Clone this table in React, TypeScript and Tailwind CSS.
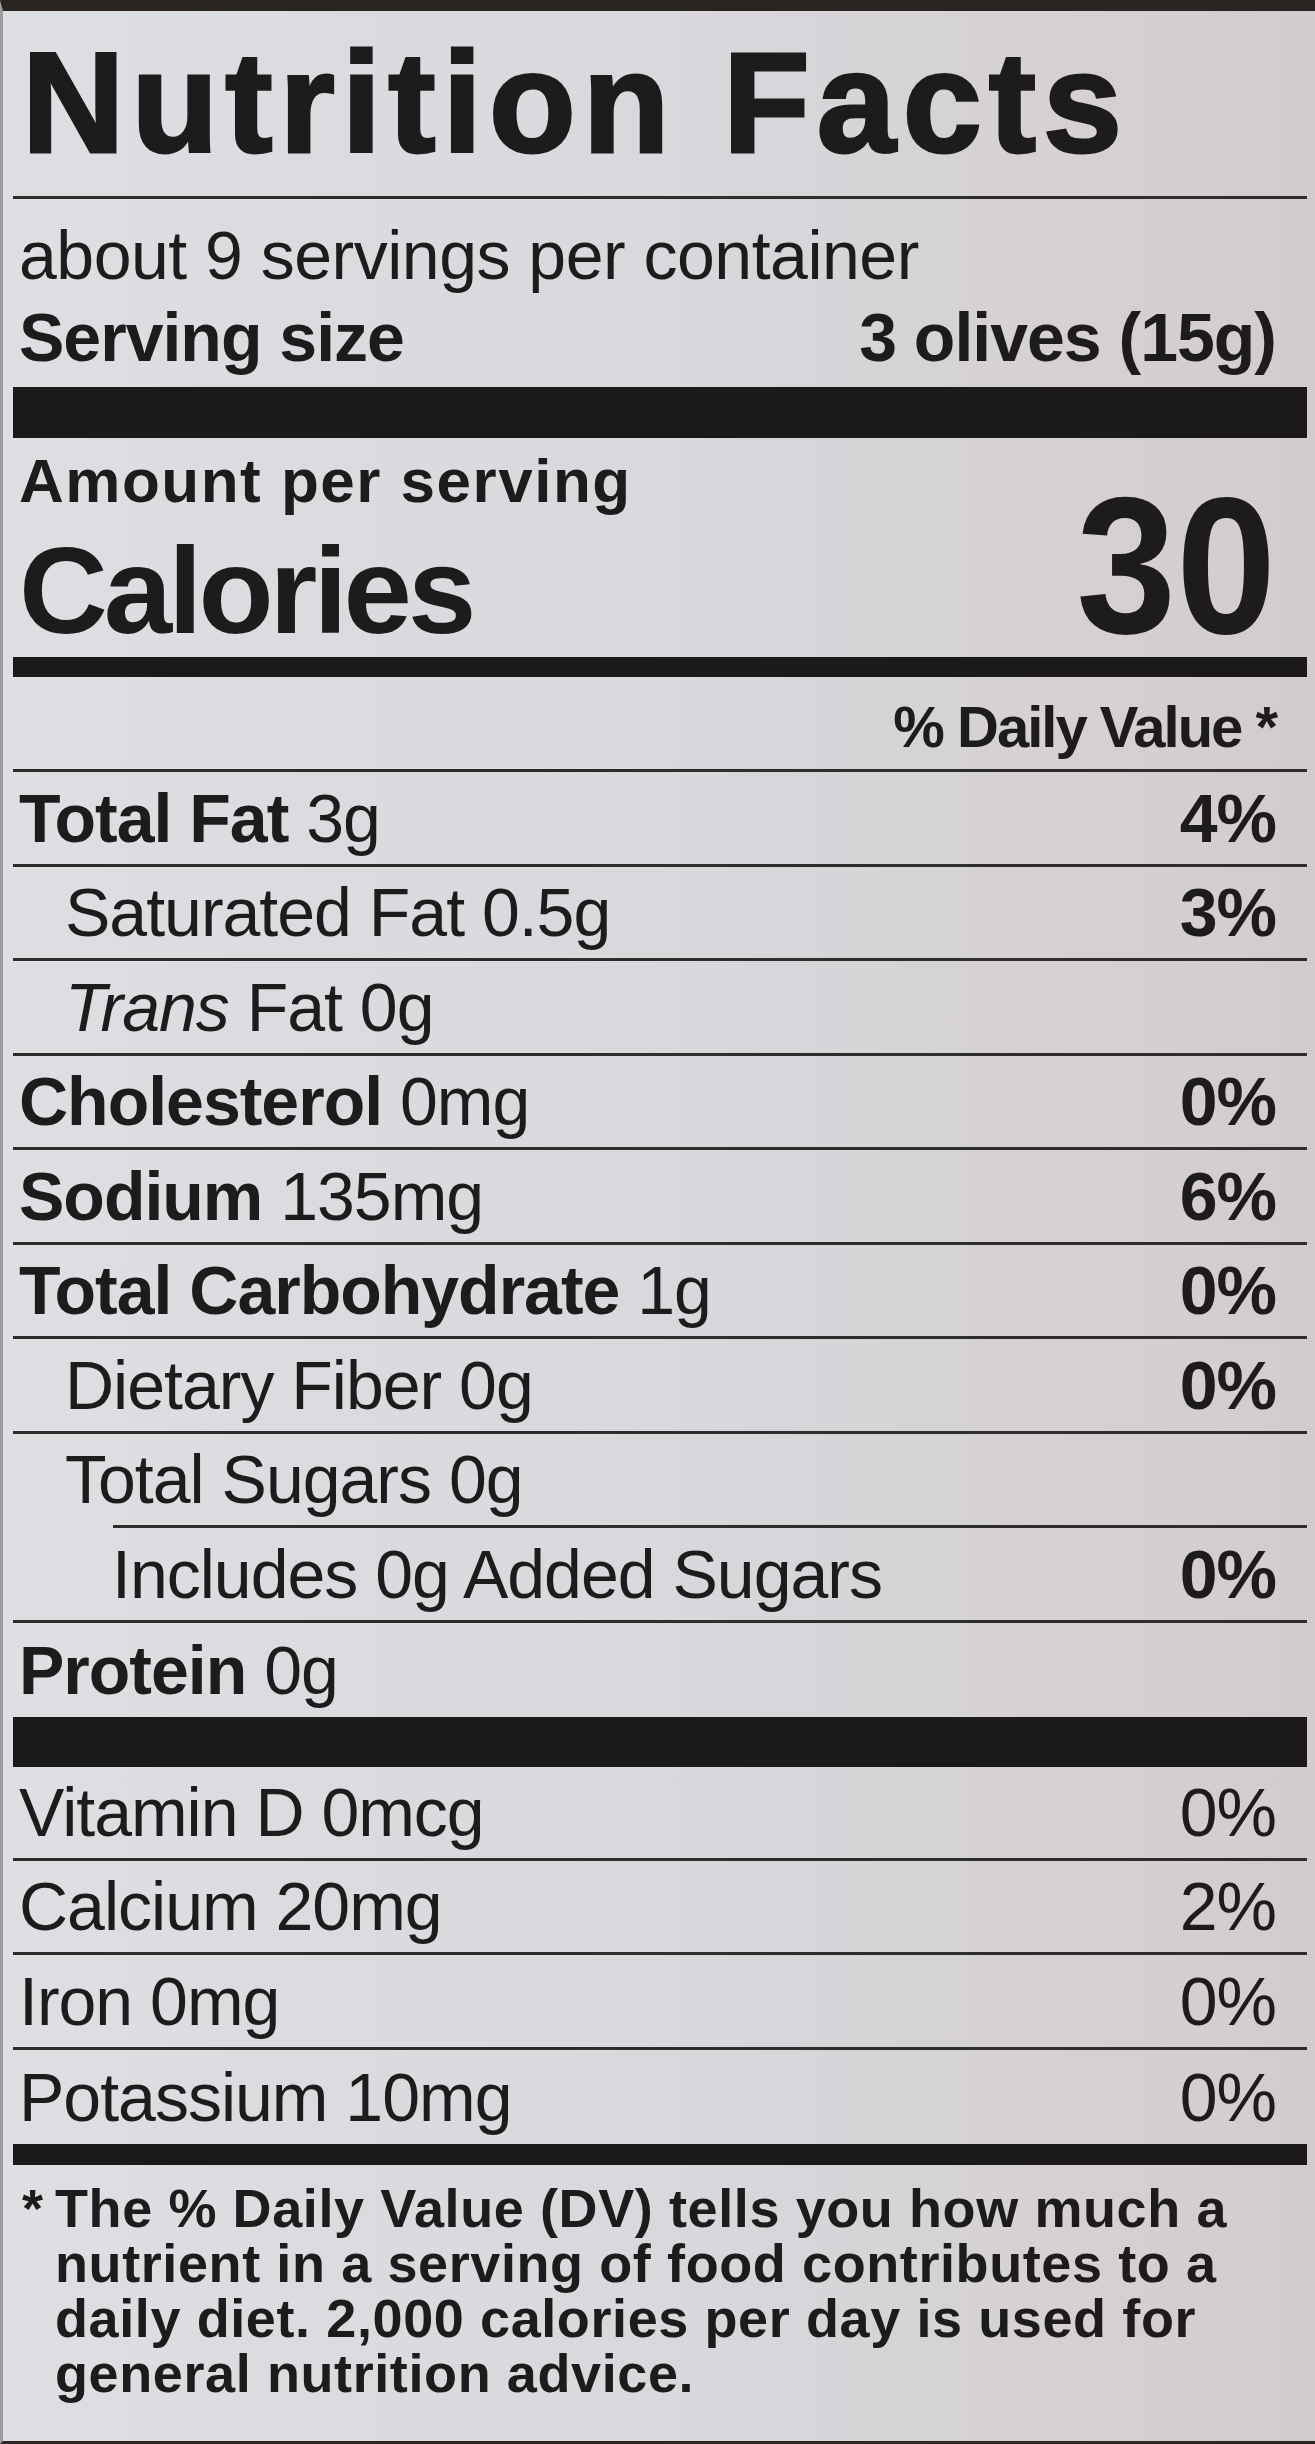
import { ReactNode } from "react";

type RowProps = {
  children: ReactNode;
  dv?: string;
  pad?: string;
  h?: string;
  dvBold?: boolean;
};

const Row = ({ children, dv, pad = "pl-[6px]", h = "h-[91.5px]", dvBold = true }: RowProps) => (
  <div className={`flex items-center justify-between pr-[31px] ${pad} ${h}`}>
    <span className="leading-[68px]">{children}</span>
    {dv && <span className={`leading-[68px] ${dvBold ? "font-bold" : ""}`}>{dv}</span>}
  </div>
);

const Line = ({ className = "" }: { className?: string }) => (
  <div className={`h-[3px] bg-[#2f2c2c] ${className}`} />
);

export default function App() {
  return (
    <div className="w-[1315px] h-[2444px] flex flex-col bg-linear-to-r from-[#dedfe3] via-[#d9d8dc] to-[#d2cccf] border-t-[11px] border-t-[#2a2522] border-b-[3px] border-b-[#2c2826] border-l-[3px] border-l-[#9c9ca0] pl-[10px] pr-[8px] [font-family:'Liberation_Sans',Arial,sans-serif] text-[#1d1b1b] text-[68px] tracking-[-1px]">
      {/* title */}
      <div className="pt-[21px] pb-[22px] pl-[9px]">
        <h1 className="text-[142px] leading-[142px] font-bold tracking-[7px] [-webkit-text-stroke:3px_#1d1b1b]">
          Nutrition Facts
        </h1>
      </div>
      <Line />

      {/* servings */}
      <div className="pt-[22px] pb-[16px] pl-[6px] pr-[31px]">
        <p className="leading-[68px] tracking-[-0.5px]">about 9 servings per container</p>
        <div className="mt-[14px] flex justify-between font-bold leading-[68px]">
          <span>Serving size</span>
          <span>3 olives (15g)</span>
        </div>
      </div>
      <div className="h-[51px] bg-[#1b1919]" />

      {/* calories */}
      <div className="pt-[12px] pb-[5px] pl-[6px] pr-[31px]">
        <p className="text-[62px] leading-[62px] font-bold tracking-[1.5px]">Amount per serving</p>
        <div className="flex justify-between items-baseline">
          <span className="text-[123px] leading-[123px] font-bold tracking-[-4px]">Calories</span>
          <span className="text-[195px] leading-[107px] font-bold tracking-[0px] scale-x-[0.92] origin-right">30</span>
        </div>
      </div>
      <div className="h-[20px] bg-[#1b1919]" />

      {/* daily value header */}
      <div className="pt-[21px] pb-[13px] pr-[31px] flex justify-end">
        <span className="text-[58px] leading-[58px] font-bold tracking-[-2px]">% Daily Value *</span>
      </div>
      <Line />

      <Row dv="4%">
        <b>Total Fat</b> 3g
      </Row>
      <Line />
      <Row dv="3%" pad="pl-[52px]">
        Saturated Fat 0.5g
      </Row>
      <Line />
      <Row pad="pl-[52px]">
        <i>Trans</i> Fat 0g
      </Row>
      <Line />
      <Row dv="0%">
        <b>Cholesterol</b> 0mg
      </Row>
      <Line />
      <Row dv="6%">
        <b>Sodium</b> 135mg
      </Row>
      <Line />
      <Row dv="0%">
        <b>Total Carbohydrate</b> 1g
      </Row>
      <Line />
      <Row dv="0%" pad="pl-[52px]">
        Dietary Fiber 0g
      </Row>
      <Line />
      <Row pad="pl-[52px]">Total Sugars 0g</Row>
      <Line className="ml-[100px]" />
      <Row dv="0%" pad="pl-[99px]">
        Includes 0g Added Sugars
      </Row>
      <Line />
      <Row h="h-[94px]">
        <b>Protein</b> 0g
      </Row>
      <div className="h-[50px] bg-[#1b1919]" />

      <Row dv="0%" h="h-[91px]" dvBold={false}>
        Vitamin D 0mcg
      </Row>
      <Line />
      <Row dv="2%" dvBold={false}>
        Calcium 20mg
      </Row>
      <Line />
      <Row dv="0%" dvBold={false}>
        Iron 0mg
      </Row>
      <Line />
      <Row dv="0%" h="h-[94px]" dvBold={false}>
        Potassium 10mg
      </Row>
      <div className="h-[21px] bg-[#1b1919]" />

      {/* footnote */}
      <div className="pt-[16px] flex text-[54px] leading-[55px] font-bold tracking-[0.6px]">
        <span className="w-[42px] pl-[9px] shrink-0">*</span>
        <p>
          The % Daily Value (DV) tells you how much a
          <br />
          nutrient in a serving of food contributes to a
          <br />
          daily diet. 2,000 calories per day is used for
          <br />
          general nutrition advice.
        </p>
      </div>
    </div>
  );
}
